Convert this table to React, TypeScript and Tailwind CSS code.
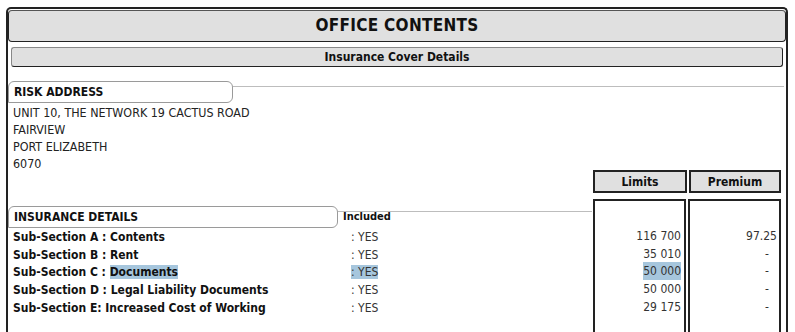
import React from "react";

const font = { fontFamily: '"DejaVu Sans Condensed", "DejaVu Sans", Verdana, sans-serif' };

type Row = { label: React.ReactNode; included: React.ReactNode; limit: React.ReactNode; premium: string };

const hl = "bg-[#a6c6dd]";

const rows: Row[] = [
  { label: "Sub-Section A : Contents", included: ": YES", limit: "116 700", premium: "97.25" },
  { label: "Sub-Section B : Rent", included: ": YES", limit: "35 010", premium: "-" },
  {
    label: (
      <>
        Sub-Section C : <span className={hl}>Documents</span>
      </>
    ),
    included: <span className={hl}>: YES</span>,
    limit: <span className={hl}>50 000</span>,
    premium: "-",
  },
  { label: "Sub-Section D : Legal Liability Documents", included: ": YES", limit: "50 000", premium: "-" },
  { label: "Sub-Section E: Increased Cost of Working", included: ": YES", limit: "29 175", premium: "-" },
];

function Tab({ title, width, lineWidth }: { title: string; width: string; lineWidth: string }) {
  return (
    <div className="flex items-start">
      <div
        className={`${width} h-[22px] border border-[#9a9a9a] rounded-[6px] rounded-bl-none flex items-center pl-[5px] text-[12px] font-bold text-[#111]`}
      >
        {title}
      </div>
      <div className={`${lineWidth} mt-[5px] border-t border-[#bdbdbd]`} />
    </div>
  );
}

export default function App() {
  return (
    <div className="min-h-screen bg-white pl-[6px] pt-[7px]" style={font}>
      <div className="w-[782px] h-[325px] border-2 border-b-0 border-[#222] rounded-t-[5px] pt-[1px] overflow-hidden">
        <div className="h-[32px] bg-[#e0e0e0] border border-[#222] border-t-[#555] rounded-[4px] flex items-center justify-center text-[17px] tracking-[0.3px] font-bold text-[#111]">
          OFFICE CONTENTS
        </div>
        <div className="mt-[5px] mx-[3px] h-[20px] bg-[#e0e0e0] border border-[#222] border-t-[#888] border-l-[#888] rounded-[3px] flex items-center justify-center text-[12px] font-bold text-[#111]">
          Insurance Cover Details
        </div>

        <div className="mt-[14px]">
          <Tab title="RISK ADDRESS" width="w-[225px]" lineWidth="w-[551px]" />
        </div>

        <div className="flex h-[90px]">
          <div className="flex-1 pl-[5px] pt-[1px] text-[12.4px] leading-[17px] text-[#222]">
            <div>UNIT 10, THE NETWORK 19 CACTUS ROAD</div>
            <div>FAIRVIEW</div>
            <div>PORT ELIZABETH</div>
            <div>6070</div>
          </div>
          <div className="flex items-end gap-[2px] pr-[5px]">
            <div className="w-[94px] h-[23px] bg-[#e0e0e0] border-2 border-[#222] flex items-center justify-center text-[12px] font-bold text-[#111]">
              Limits
            </div>
            <div className="w-[92px] h-[23px] bg-[#e0e0e0] border-2 border-[#222] flex items-center justify-center text-[12px] font-bold text-[#111]">
              Premium
            </div>
          </div>
        </div>

        <div className="mt-[6px] flex">
          <div className="flex-1 pt-[7px]">
            <div className="flex items-start">
              <Tab title="INSURANCE DETAILS" width="w-[330px]" lineWidth="w-[254px]" />
            </div>
            <div className="-mt-[17px] pl-[335px] text-[11px] font-bold text-[#111] h-[12px] leading-[12px]">Included</div>
            <div className="mt-[5px]">
              {rows.map((r, i) => (
                <div key={i} className="flex h-[17.75px] items-center text-[12px]">
                  <div className="w-[343px] pl-[5px] font-bold text-[#111] whitespace-nowrap">{r.label}</div>
                  <div className="text-[#333]">{r.included}</div>
                </div>
              ))}
            </div>
          </div>
          <div className="flex gap-[2px] pr-[5px]">
            <div className="w-[93px] h-[140px] border-2 border-b-0 border-[#222] pt-[26px] pr-[3px] text-right text-[12px] text-[#333]">
              {rows.map((r, i) => (
                <div key={i} className="h-[17.75px] flex items-center justify-end">
                  {r.limit}
                </div>
              ))}
            </div>
            <div className="w-[93px] h-[140px] border-2 border-b-0 border-[#222] pt-[26px] pr-[2px] text-right text-[12px] text-[#333]">
              {rows.map((r, i) => (
                <div key={i} className="h-[17.75px] flex items-center justify-end">
                  {r.premium === "-" ? <span className="pr-[8px]">-</span> : r.premium}
                </div>
              ))}
            </div>
          </div>
        </div>
      </div>
    </div>
  );
}
